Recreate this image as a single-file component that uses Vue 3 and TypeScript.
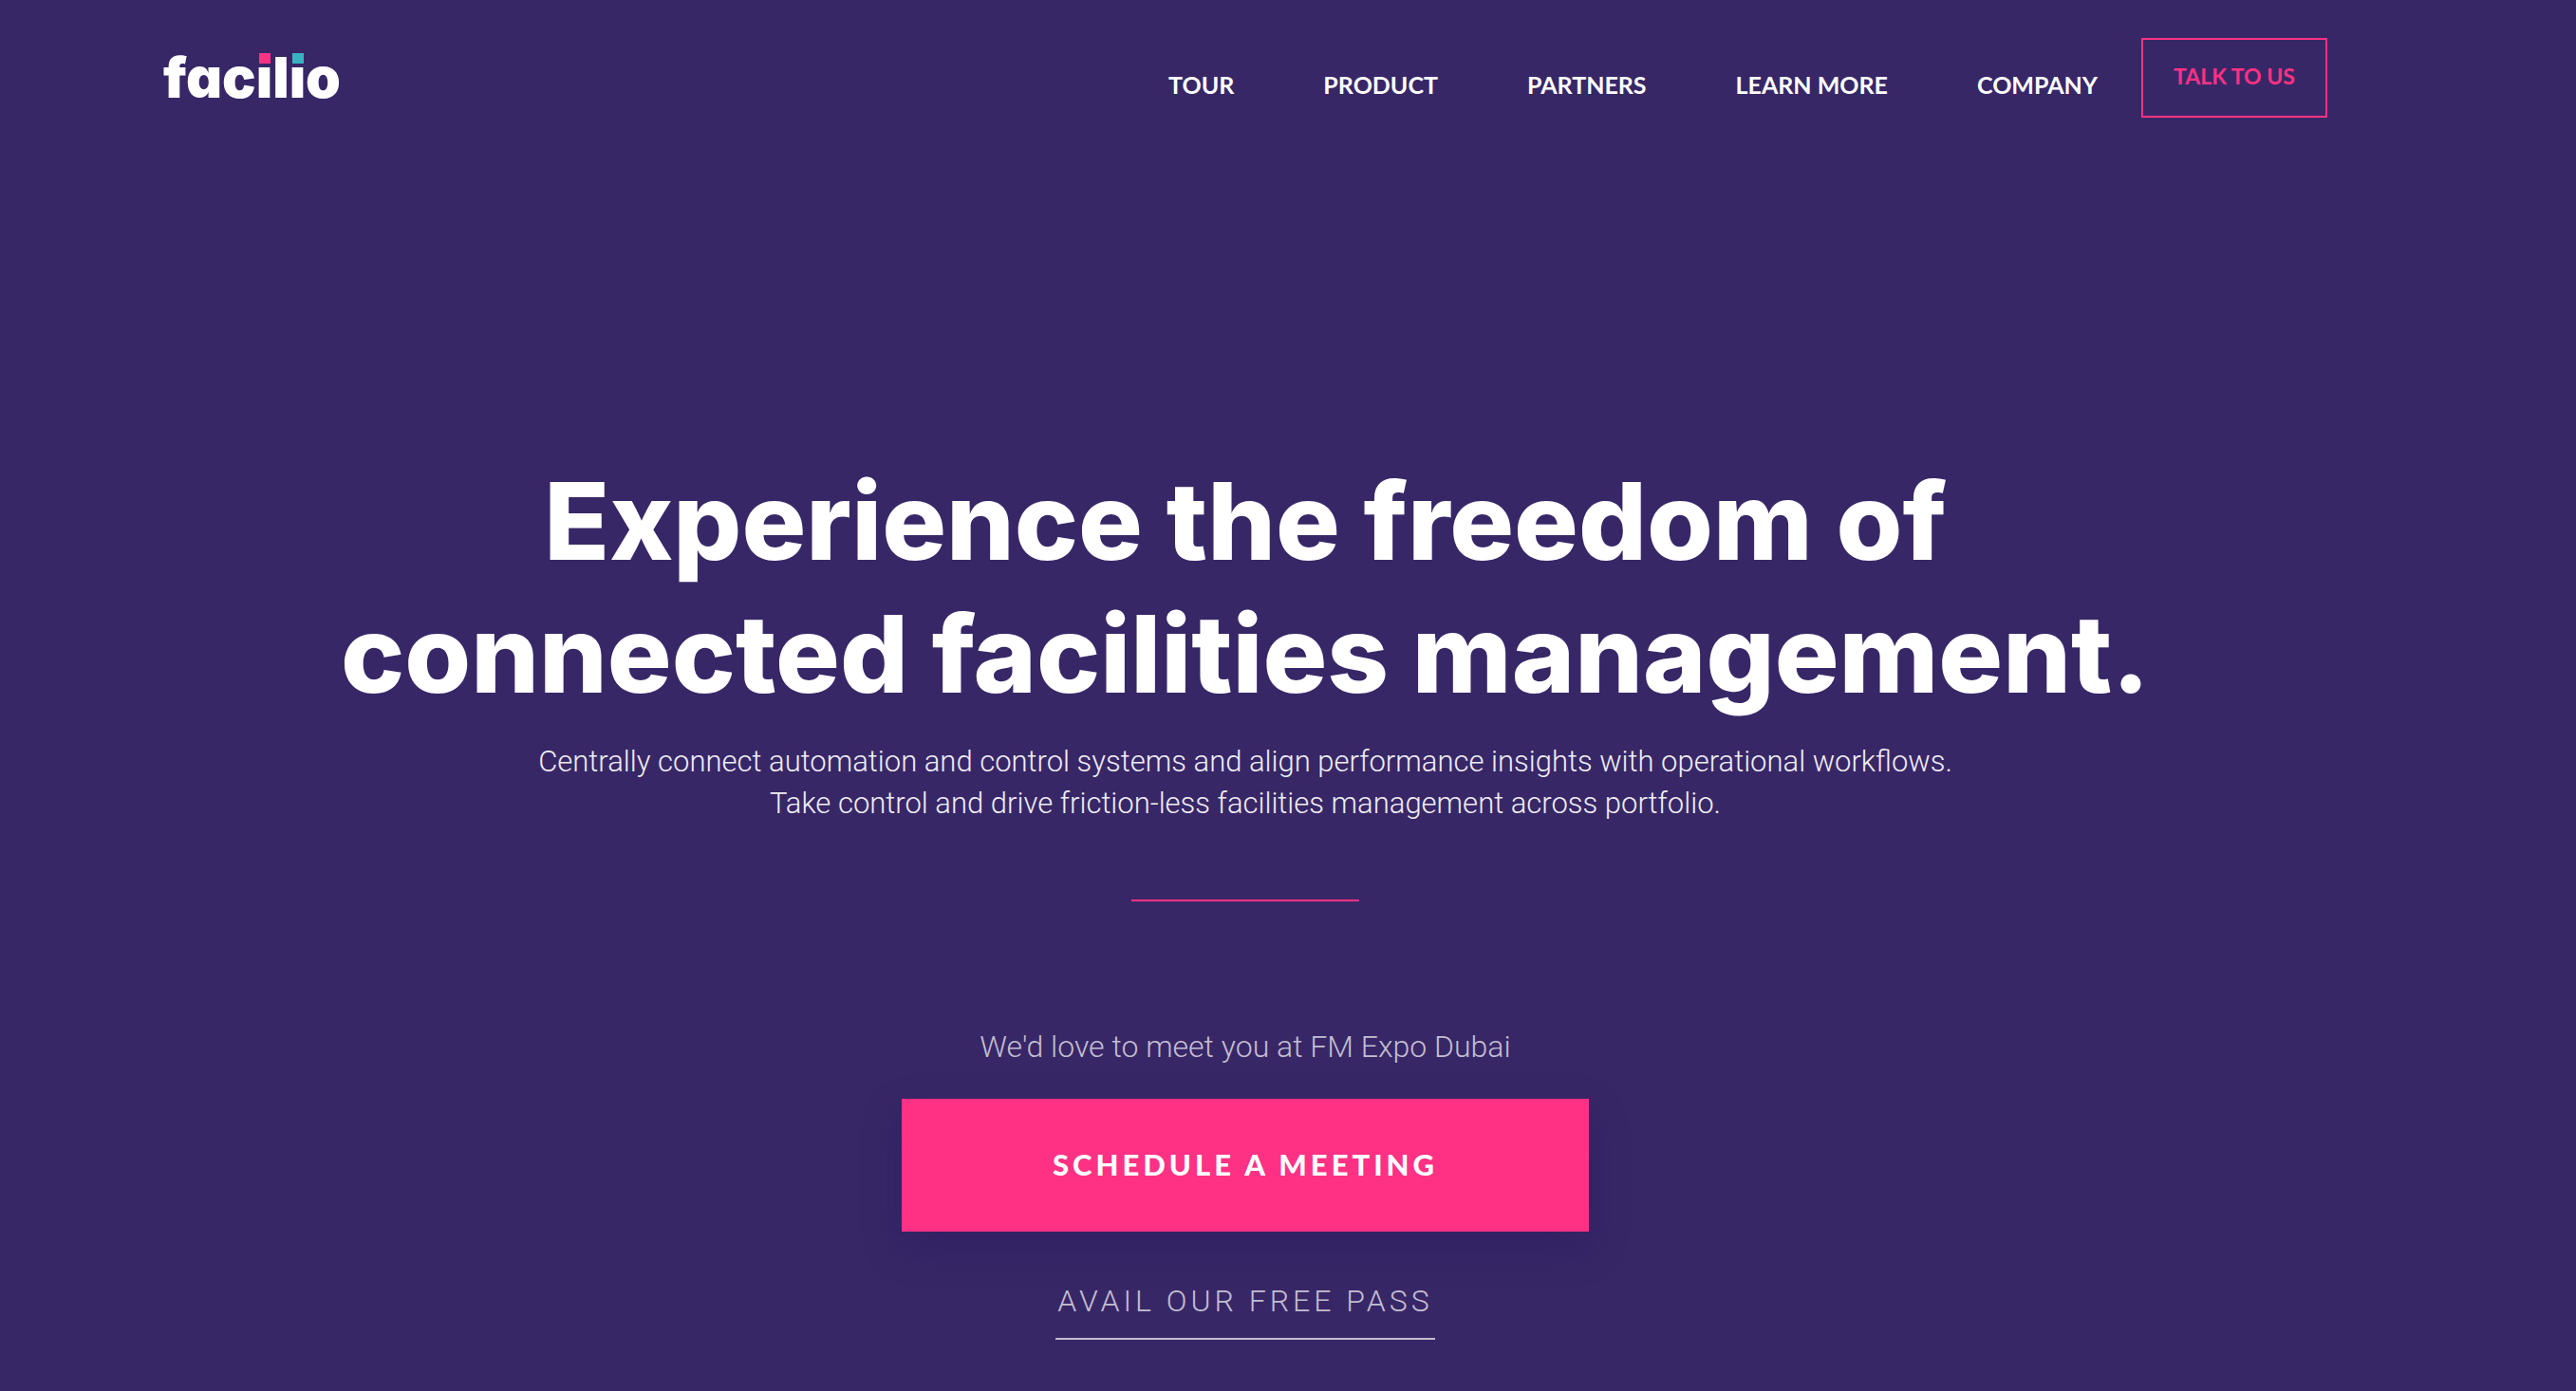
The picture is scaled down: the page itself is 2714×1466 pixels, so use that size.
<script setup lang="ts">
interface NavItem {
  label: string
  href: string
}

const navItems: NavItem[] = [
  { label: 'TOUR', href: '#tour' },
  { label: 'PRODUCT', href: '#product' },
  { label: 'PARTNERS', href: '#partners' },
  { label: 'LEARN MORE', href: '#learn-more' },
  { label: 'COMPANY', href: '#company' },
]
</script>

<template>
  <div class="page">
    <header class="header">
      <a class="logo" href="#home" aria-label="facilio">fac<span class="tile pink">i</span>l<span class="tile teal">i</span>o</a>
      <nav class="nav" aria-label="Main">
        <ul class="menu">
          <li v-for="item in navItems" :key="item.label">
            <a class="menu-link" :href="item.href">{{ item.label }}</a>
          </li>
        </ul>
        <a class="talk" href="#contact">TALK TO US</a>
      </nav>
    </header>

    <main class="hero">
      <h1 class="title">Experience the freedom of<br />connected facilities management.</h1>
      <p class="lead">
        Centrally connect automation and control systems and align performance insights with operational workflows.<br />
        Take control and drive friction-less facilities management across portfolio.
      </p>
      <hr class="divider" />
      <p class="invite">We'd love to meet you at FM Expo Dubai</p>
      <button class="cta" type="button">SCHEDULE A MEETING</button>
      <a class="pass" href="#free-pass">AVAIL OUR FREE PASS</a>
    </main>
  </div>
</template>

<style>
body {
  margin: 0;
  background: #382767;
}
</style>

<style scoped>
.page {
  box-sizing: border-box;
  min-height: 100vh;
  padding: 40px 262px 40px 172px;
  background: #382767;
  color: #fff;
  font-family: Lato, "Open Sans", sans-serif;
}

.header {
  display: flex;
  justify-content: space-between;
  align-items: flex-start;
}

.logo {
  margin-top: 6px;
  color: #fff;
  font: 900 59px/72px Inter, sans-serif;
  font-feature-settings: "cv11";
  text-decoration: none;
}

.tile {
  position: relative;
}

/* Square tile laid over the dot of each i */
.tile::before {
  content: "";
  position: absolute;
  top: 6px;
  left: 1px;
  width: 12px;
  height: 11px;
  border: 2px solid #382767;
  border-top-width: 4px;
}

.pink::before {
  background: #ff3184;
  background-clip: padding-box;
}

.teal::before {
  background: #38b3c2;
  background-clip: padding-box;
}

.nav {
  display: flex;
  gap: 46px;
}

.menu {
  display: flex;
  gap: 94px;
  margin: 0;
  padding: 32px 0 0;
  list-style: none;
}

.menu-link {
  display: block;
  color: #fff;
  font-size: 25px;
  font-weight: 700;
  line-height: 34px;
  text-decoration: none;
}

.talk {
  box-sizing: border-box;
  width: 196px;
  height: 84px;
  padding-top: 21px;
  border: 2px solid #ff3184;
  color: #ff3184;
  font-size: 23px;
  font-weight: 700;
  line-height: 34px;
  text-align: center;
  text-decoration: none;
}

.hero {
  display: flex;
  flex-direction: column;
  align-items: center;
  padding-top: 355px;
  text-align: center;
}

.title {
  margin: 0;
  font: 800 113px/140px Inter, sans-serif;
  white-space: nowrap;
}

.lead,
.invite,
.pass {
  font-family: Roboto, "Open Sans", sans-serif;
  font-size: 32px;
  font-weight: 300;
  line-height: 44px;
}

.lead {
  margin: 22px 0 0;
  color: #efedf4;
  font-size: 31px;
}

.divider {
  width: 240px;
  height: 2px;
  margin: 79px 0 131px;
  border: 0;
  background: #ff3184;
}

.invite {
  margin: 0;
  color: #c3bed1;
}

.cta {
  width: 724px;
  height: 140px;
  margin-top: 33px;
  padding: 0 0 2px;
  border: 0;
  background: #ff3184;
  box-shadow: 0 16px 36px rgba(34, 20, 92, 0.35);
  color: #fff;
  font: 900 31px/44px Lato, "Open Sans", sans-serif;
  letter-spacing: 4px;
  cursor: pointer;
}

.pass {
  margin-top: 51px;
  padding: 0 2px 17px;
  border-bottom: 2px solid #c3bed1;
  color: #c3bed1;
  letter-spacing: 4px;
  text-decoration: none;
}
</style>
